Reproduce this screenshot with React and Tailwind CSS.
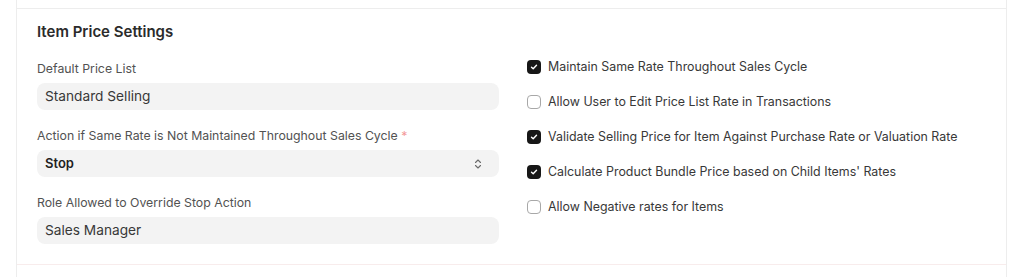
import React from "react";

const fields = [
  { label: "Default Price List", value: "Standard Selling" },
  { label: "Action if Same Rate is Not Maintained Throughout Sales Cycle", value: "Stop", select: true, required: true },
  { label: "Role Allowed to Override Stop Action", value: "Sales Manager" },
];

const checks = [
  { label: "Maintain Same Rate Throughout Sales Cycle", checked: true },
  { label: "Allow User to Edit Price List Rate in Transactions", checked: false },
  { label: "Validate Selling Price for Item Against Purchase Rate or Valuation Rate", checked: true },
  { label: "Calculate Product Bundle Price based on Child Items' Rates", checked: true },
  { label: "Allow Negative rates for Items", checked: false },
];

const Checkbox = ({ checked }) =>
  checked ? (
    <span className="w-[14px] h-[14px] rounded-[4px] bg-[#171717] flex items-center justify-center shrink-0">
      <svg width="8" height="8" viewBox="0 0 8 8" fill="none">
        <path d="M1.5 4.2 3.2 5.8 6.5 2.2" stroke="white" strokeWidth="1.4" strokeLinecap="round" strokeLinejoin="round" />
      </svg>
    </span>
  ) : (
    <span className="w-[14px] h-[14px] rounded-[4px] bg-white border border-[#a8a8a8] shrink-0" />
  );

const Field = ({ label, value, select, required }) => (
  <div className="flex flex-col">
    <label className="text-[12.3px] leading-[16px] text-[#525252]">
      {label}
      {required && <span className="text-[#f39a9a]"> *</span>}
    </label>
    <div className="mt-[6px] h-[27px] rounded-[8px] bg-[#f3f3f3] flex items-center justify-between pl-[8px] pr-[8px]">
      <span className={`text-[13.7px] ${select ? "font-semibold text-[#1f1f1f] text-[13px]" : "text-[#383838]"}`}>{value}</span>
      {select && (
        <svg width="8" height="12" viewBox="0 0 8 12" fill="none" className="mr-[9px]">
          <path d="M1.5 4.5 4 2 6.5 4.5" stroke="#6b6b6b" strokeWidth="1.1" strokeLinecap="round" strokeLinejoin="round" />
          <path d="M1.5 7.5 4 10 6.5 7.5" stroke="#6b6b6b" strokeWidth="1.1" strokeLinecap="round" strokeLinejoin="round" />
        </svg>
      )}
    </div>
  </div>
);

export default function App() {
  return (
    <div className="w-[1024px] h-[277px] bg-white overflow-hidden" style={{ fontFamily: "Inter, 'Noto Sans', sans-serif" }}>
      <div className="ml-[16px] w-[991px] h-full border-l border-r border-[#ededed] flex flex-col">
        <div className="h-[9px] border-b border-[#ededed]" />
        <section className="pt-[13px] pb-[20px] px-[20px] border-b border-[#f8ecec]">
          <h2 className="text-[15px] leading-[20px] font-semibold text-[#2b2b2b]">Item Price Settings</h2>
          <div className="mt-[19px] grid grid-cols-[462px_1fr] gap-x-[28px]">
            <div className="flex flex-col gap-[18px]">
              {fields.map((f) => (
                <Field key={f.label} {...f} />
              ))}
            </div>
            <div className="flex flex-col gap-[15px] -mt-[4px]">
              {checks.map((c) => (
                <div key={c.label} className="flex items-center gap-[7px] h-[20px]">
                  <Checkbox checked={c.checked} />
                  <span className="text-[12.4px] text-[#383838]">{c.label}</span>
                </div>
              ))}
            </div>
          </div>
        </section>
      </div>
    </div>
  );
}
